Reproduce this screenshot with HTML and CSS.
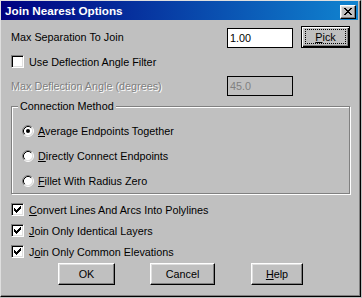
FILE: index.html
```html
<!DOCTYPE html>
<html lang="en">
<head>
    <meta charset="UTF-8">
    <title>Join Nearest Options</title>
    <link rel="stylesheet" href="styles.css">
</head>
<body>
    <div class="window">
        <div class="titlebar">
            <span class="title">Join Nearest Options</span>
            <span class="close-btn">
                <svg width="8" height="7" viewBox="0 0 8 7" shape-rendering="crispEdges">
                    <path d="M0 0h2v1h-2zM6 0h2v1h-2zM1 1h2v1h-2zM5 1h2v1h-2zM2 2h4v1h-4zM3 3h2v1h-2zM2 4h4v1h-4zM1 5h2v1h-2zM5 5h2v1h-2zM0 6h2v1h-2zM6 6h2v1h-2z" fill="#000"/>
                </svg>
            </span>
        </div>
        <div class="content">
            <div class="field-row">
                <span class="label">Max Separation To Join</span>
                <span class="textbox">1.00</span>
                <button class="btn btn-default pick"><span class="focus-rect"><u>P</u>ick</span></button>
            </div>

            <div class="check first-check">
                <span class="box"></span>
                <span>Use Deflection Angle Filter</span>
            </div>

            <div class="field-row angle-row">
                <span class="label disabled">Max Deflection Angle (degrees)</span>
                <span class="textbox textbox-disabled">45.0</span>
            </div>

            <div class="group">
                <span class="group-title">Connection Method</span>
                <div class="radio-list">
                    <div class="radio">
                        <svg width="12" height="12" viewBox="0 0 12 12">
                            <circle cx="6" cy="6" r="4.5" fill="#fff"/>
                            <path d="M2.11 9.89A5.5 5.5 0 0 1 9.89 2.11" stroke="#808080" fill="none"/>
                            <path d="M9.89 2.11A5.5 5.5 0 0 1 2.11 9.89" stroke="#fff" fill="none"/>
                            <path d="M2.82 9.18A4.5 4.5 0 0 1 9.18 2.82" stroke="#000" fill="none"/>
                            <path d="M9.18 2.82A4.5 4.5 0 0 1 2.82 9.18" stroke="#dfdfdf" fill="none"/>
                            <circle cx="6" cy="6" r="2" fill="#000"/>
                        </svg>
                        <span><u>A</u>verage Endpoints Together</span>
                    </div>
                    <div class="radio">
                        <svg width="12" height="12" viewBox="0 0 12 12">
                            <circle cx="6" cy="6" r="4.5" fill="#fff"/>
                            <path d="M2.11 9.89A5.5 5.5 0 0 1 9.89 2.11" stroke="#808080" fill="none"/>
                            <path d="M9.89 2.11A5.5 5.5 0 0 1 2.11 9.89" stroke="#fff" fill="none"/>
                            <path d="M2.82 9.18A4.5 4.5 0 0 1 9.18 2.82" stroke="#000" fill="none"/>
                            <path d="M9.18 2.82A4.5 4.5 0 0 1 2.82 9.18" stroke="#dfdfdf" fill="none"/>
                        </svg>
                        <span><u>D</u>irectly Connect Endpoints</span>
                    </div>
                    <div class="radio">
                        <svg width="12" height="12" viewBox="0 0 12 12">
                            <circle cx="6" cy="6" r="4.5" fill="#fff"/>
                            <path d="M2.11 9.89A5.5 5.5 0 0 1 9.89 2.11" stroke="#808080" fill="none"/>
                            <path d="M9.89 2.11A5.5 5.5 0 0 1 2.11 9.89" stroke="#fff" fill="none"/>
                            <path d="M2.82 9.18A4.5 4.5 0 0 1 9.18 2.82" stroke="#000" fill="none"/>
                            <path d="M9.18 2.82A4.5 4.5 0 0 1 2.82 9.18" stroke="#dfdfdf" fill="none"/>
                        </svg>
                        <span><u>F</u>illet With Radius Zero</span>
                    </div>
                </div>
            </div>

            <div class="check-list">
                <div class="check">
                    <span class="box"><svg width="7" height="7" viewBox="0 0 7 7" shape-rendering="crispEdges"><path d="M0 2h1v1h1v1h1v-1h1v-1h1v-1h1v-1h1v3h-1v1h-1v1h-1v1h-1v1h-1v-1h-1v-1h-1v-1h-1z" fill="#000"/></svg></span>
                    <span><u>C</u>onvert Lines And Arcs Into Polylines</span>
                </div>
                <div class="check">
                    <span class="box"><svg width="7" height="7" viewBox="0 0 7 7" shape-rendering="crispEdges"><path d="M0 2h1v1h1v1h1v-1h1v-1h1v-1h1v-1h1v3h-1v1h-1v1h-1v1h-1v1h-1v-1h-1v-1h-1v-1h-1z" fill="#000"/></svg></span>
                    <span><u>J</u>oin Only Identical Layers</span>
                </div>
                <div class="check">
                    <span class="box"><svg width="7" height="7" viewBox="0 0 7 7" shape-rendering="crispEdges"><path d="M0 2h1v1h1v1h1v-1h1v-1h1v-1h1v-1h1v3h-1v1h-1v1h-1v1h-1v1h-1v-1h-1v-1h-1v-1h-1z" fill="#000"/></svg></span>
                    <span>J<u>o</u>in Only Common Elevations</span>
                </div>
            </div>

            <div class="buttons">
                <button class="btn btn-ok">OK</button>
                <button class="btn btn-cancel">Cancel</button>
                <button class="btn btn-help"><u>H</u>elp</button>
            </div>
        </div>
    </div>
</body>
</html>
```

FILE: styles.css
```css
* {
    box-sizing: border-box;
}
body {
    margin: 0;
    background-color: #c0c0c0;
    font-family: "Liberation Sans", Arial, sans-serif;
    font-size: 10.8px;
    color: #000;
}
.window {
    width: 361px;
    height: 297px;
    border: 1px solid;
    border-color: #dfdfdf #000 #000 #dfdfdf;
    box-shadow: inset -1px -1px #808080;
    padding: 0 2px 2px 0;
    background-color: #c0c0c0;
}
.titlebar {
    display: flex;
    align-items: flex-start;
    height: 19px;
    padding: 0 2px 0 4px;
    background: linear-gradient(to right, #000080, #1084d0);
}
.title {
    color: #fff;
    font-weight: bold;
    font-size: 11.7px;
    line-height: 20px;
}
.close-btn {
    display: flex;
    align-items: center;
    justify-content: center;
    width: 16px;
    height: 14px;
    margin: 4px 0 0 auto;
    padding-bottom: 1px;
    background-color: #c0c0c0;
    border: 1px solid;
    border-color: #fff #000 #000 #fff;
    box-shadow: inset -1px -1px #808080, inset 1px 1px #dfdfdf;
}
.content {
    padding: 6px 8px 0 10px;
}
.field-row {
    display: flex;
    align-items: center;
    height: 22px;
}
.label {
    flex: 1;
}
.disabled {
    color: #808080;
    text-shadow: 1px 1px 0 #fff;
}
.textbox {
    align-self: flex-end;
    width: 66px;
    height: 20px;
    margin-right: 8px;
    padding: 2px 0 0 2px;
    background-color: #fff;
    border: 1px solid #000;
    line-height: 15px;
}
.textbox-disabled {
    align-self: center;
    margin-right: 57px;
    background-color: #c0c0c0;
    color: #808080;
}
.angle-row {
    height: 20px;
    margin-top: 8px;
}
.btn {
    display: flex;
    align-items: center;
    justify-content: center;
    height: 22px;
    padding: 0;
    background-color: #c0c0c0;
    border: 1px solid;
    border-color: #fff #000 #000 #fff;
    box-shadow: inset -1px -1px #808080, inset 1px 1px #dfdfdf;
    font: inherit;
    color: #000;
}
.btn-default {
    border-color: #000;
    box-shadow: inset 1px 1px #fff, inset -1px -1px #000, inset -2px -2px #808080;
}
.pick {
    width: 49px;
}
.focus-rect {
    display: flex;
    align-items: center;
    justify-content: center;
    width: 41px;
    height: 15px;
    margin-bottom: 1px;
    border: 1px dotted #000;
}
.check {
    display: flex;
    align-items: center;
    gap: 5px;
    height: 13px;
}
.first-check {
    margin-top: 7px;
}
.box {
    display: flex;
    align-items: center;
    justify-content: center;
    width: 13px;
    height: 13px;
    background-color: #fff;
    border: 1px solid;
    border-color: #808080 #fff #fff #808080;
    box-shadow: inset 1px 1px #000, inset -1px -1px #dfdfdf;
}
.group {
    display: flex;
    flex-direction: column;
    align-items: flex-start;
    margin-top: 10px;
    padding: 0 0 6px 10px;
    border: 1px solid #808080;
    box-shadow: inset 1px 1px #fff, 1px 1px 0 #fff;
}
.group-title {
    margin: -7px 0 0 -4px;
    padding: 0 2px;
    line-height: 13px;
    background-color: #c0c0c0;
}
.radio-list {
    display: flex;
    flex-direction: column;
    gap: 12px;
    margin-top: 11px;
}
.radio {
    display: flex;
    align-items: center;
    gap: 4px;
    height: 13px;
}
.check-list {
    display: flex;
    flex-direction: column;
    gap: 8px;
    margin-top: 9px;
}
.buttons {
    display: flex;
    margin-top: 5px;
}
.btn-ok {
    width: 57px;
    margin-left: 47px;
}
.btn-cancel {
    width: 65px;
    margin-left: 35px;
}
.btn-help {
    width: 52px;
    margin-left: 36px;
}
```
